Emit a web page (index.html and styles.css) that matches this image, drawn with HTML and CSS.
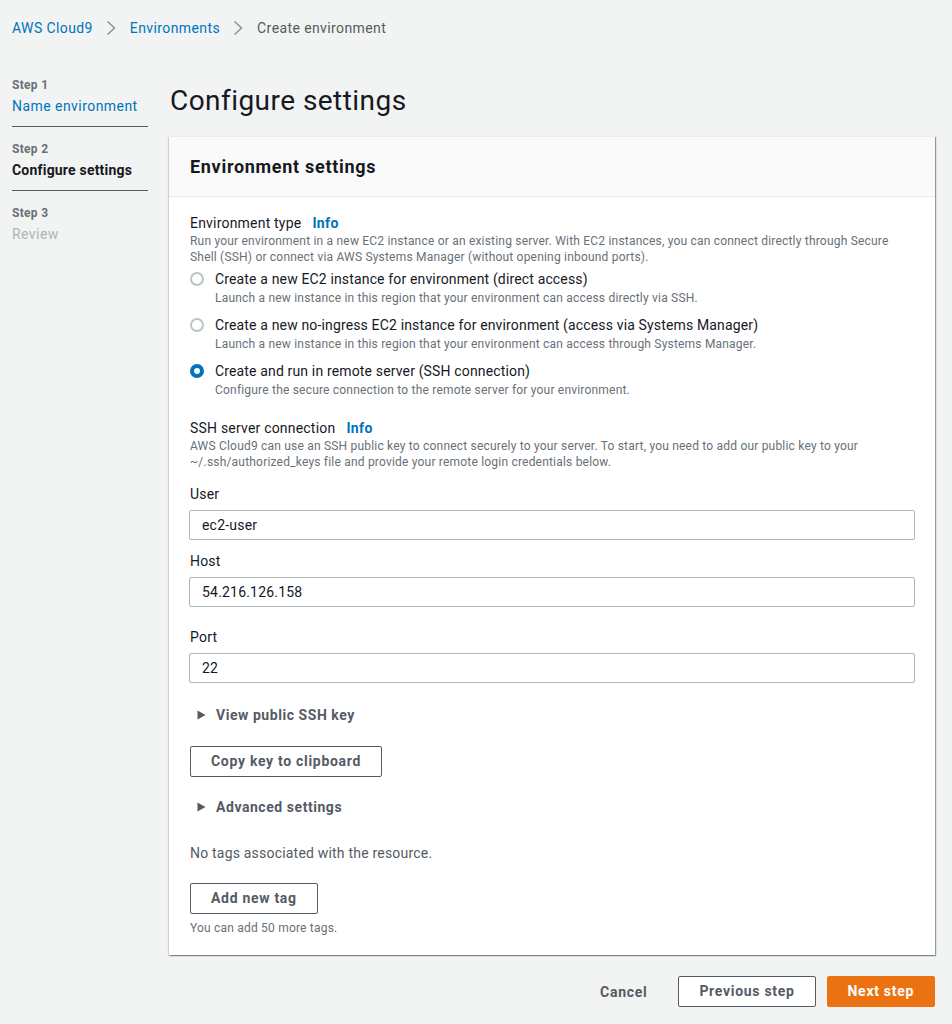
FILE: index.html
```html
<!DOCTYPE html>
<html lang="en">
<head>
<meta charset="utf-8">
<title>Create environment</title>
<link rel="stylesheet" href="styles.css">
</head>
<body>
<nav class="breadcrumbs">
  <a class="crumb link">AWS Cloud9</a>
  <svg class="chev" width="10" height="16" viewBox="0 0 10 16"><path d="M1.5 1.5 L8.5 8 L1.5 14.5" fill="none" stroke="#879596" stroke-width="1.5"/></svg>
  <a class="crumb link">Environments</a>
  <svg class="chev" width="10" height="16" viewBox="0 0 10 16"><path d="M1.5 1.5 L8.5 8 L1.5 14.5" fill="none" stroke="#879596" stroke-width="1.5"/></svg>
  <span class="crumb current">Create environment</span>
</nav>

<div class="layout">
  <aside class="steps">
    <div class="step">
      <div class="step-num">Step 1</div>
      <div class="step-name done">Name environment</div>
    </div>
    <div class="step">
      <div class="step-num">Step 2</div>
      <div class="step-name active">Configure settings</div>
    </div>
    <div class="step last">
      <div class="step-num">Step 3</div>
      <div class="step-name disabled">Review</div>
    </div>
  </aside>

  <main class="main">
    <h1 class="page-title">Configure settings</h1>
    <section class="card">
      <header class="card-header"><h2>Environment settings</h2></header>
      <div class="card-body">
        <div class="field-head">
          <span class="label">Environment type</span><span class="info">Info</span>
        </div>
        <p class="desc">Run your environment in a new EC2 instance or an existing server. With EC2 instances, you can connect directly through Secure Shell (SSH) or connect via AWS Systems Manager (without opening inbound ports).</p>

        <div class="radios">
          <div class="radio">
            <span class="dot"></span>
            <div>
              <div class="radio-label">Create a new EC2 instance for environment (direct access)</div>
              <div class="radio-desc">Launch a new instance in this region that your environment can access directly via SSH.</div>
            </div>
          </div>
          <div class="radio">
            <span class="dot"></span>
            <div>
              <div class="radio-label">Create a new no-ingress EC2 instance for environment (access via Systems Manager)</div>
              <div class="radio-desc">Launch a new instance in this region that your environment can access through Systems Manager.</div>
            </div>
          </div>
          <div class="radio">
            <span class="dot checked"></span>
            <div>
              <div class="radio-label">Create and run in remote server (SSH connection)</div>
              <div class="radio-desc">Configure the secure connection to the remote server for your environment.</div>
            </div>
          </div>
        </div>

        <div class="field-head ssh">
          <span class="label">SSH server connection</span><span class="info">Info</span>
        </div>
        <p class="desc">AWS Cloud9 can use an SSH public key to connect securely to your server. To start, you need to add our public key to your ~/.ssh/authorized_keys file and provide your remote login credentials below.</p>

        <div class="input-field user">
          <label class="label">User</label>
          <div class="input">ec2-user</div>
        </div>
        <div class="input-field host">
          <label class="label">Host</label>
          <div class="input">54.216.126.158</div>
        </div>
        <div class="input-field port">
          <label class="label">Port</label>
          <div class="input">22</div>
        </div>

        <div class="expander ssh-key">
          <svg width="9" height="10" viewBox="0 0 9 10"><path d="M0.5 0.5 L8.5 5 L0.5 9.5 Z" fill="#545b64"/></svg>
          <span>View public SSH key</span>
        </div>
        <div class="btn-row copy"><button class="btn">Copy key to clipboard</button></div>
        <div class="expander advanced">
          <svg width="9" height="10" viewBox="0 0 9 10"><path d="M0.5 0.5 L8.5 5 L0.5 9.5 Z" fill="#545b64"/></svg>
          <span>Advanced settings</span>
        </div>

        <p class="no-tags">No tags associated with the resource.</p>
        <div class="btn-row tag"><button class="btn">Add new tag</button></div>
        <p class="hint">You can add 50 more tags.</p>
      </div>
    </section>

    <div class="actions">
      <button class="btn-link">Cancel</button>
      <button class="btn">Previous step</button>
      <button class="btn primary">Next step</button>
    </div>
  </main>
</div>
</body>
</html>
```

FILE: styles.css
```css
* { box-sizing: border-box; }
html, body { margin: 0; padding: 0; }
body {
  background: #f2f3f3;
  font-family: Roboto, "Liberation Sans", Arial, sans-serif;
  color: #16191f;
  font-size: 14px;
  letter-spacing: 0.2px;
  width: 952px;
  height: 1024px;
  overflow: hidden;
}

.breadcrumbs {
  display: flex;
  align-items: center;
  padding: 18px 0 0 12px;
  height: 38px;
  font-size: 14px;
  line-height: 20px;
  letter-spacing: 0.4px;
}
.crumb.link { color: #0073bb; }
.crumb.current { color: #545b64; }
.chev { margin: 0 14px 0 13px; }

.layout {
  display: flex;
  padding-top: 45px;
}

.steps {
  width: 169px;
  padding-left: 12px;
  padding-right: 21px;
  flex: none;
  margin-top: -10px;
}
.step {
  border-bottom: 1px solid #545b64;
  padding: 4px 0 10px;
  margin-bottom: 10px;
}
.step.last { border-bottom: 0; }
.step-num {
  font-size: 12px;
  line-height: 16px;
  font-weight: 700;
  color: #687078;
  letter-spacing: 0.3px;
}
.step-name {
  font-size: 14px;
  line-height: 20px;
  margin-top: 3px;
  letter-spacing: 0.45px;
}
.step-name.done { color: #0073bb; }
.step-name.active { font-weight: 700; color: #16191f; letter-spacing: 0.2px; }
.step-name.disabled { color: #aab7b8; }

.main {
  width: 766px;
  flex: none;
}
.page-title {
  font-size: 28px;
  font-weight: 400;
  line-height: 36px;
  margin: 0 0 17px 1px;
  color: #16191f;
  letter-spacing: 0.45px;
}

.card {
  background: #fff;
  box-shadow: 1px 1px 1px 0 rgba(0,28,36,0.3), 1px 1px 1px 0 rgba(0,28,36,0.15), -1px 1px 1px 0 rgba(0,28,36,0.15);
  border-top: 1px solid #eaeded;
}
.card-header {
  background: #fafafa;
  border-bottom: 1px solid #eaeded;
  padding: 19px 21px 18px;
}
.card-header h2 {
  margin: 0;
  font-size: 18px;
  line-height: 22px;
  font-weight: 700;
  letter-spacing: 0.7px;
}
.card-body {
  padding: 16px 20px 19px 21px;
}

.field-head {
  display: flex;
  align-items: baseline;
  line-height: 20px;
}
.label { font-size: 14px; color: #16191f; }
.info {
  margin-left: 11px;
  color: #0073bb;
  font-weight: 700;
  font-size: 14px;
  letter-spacing: 0.4px;
}
.desc {
  margin: 0;
  font-size: 12px;
  line-height: 16px;
  color: #687078;
}

.radios { margin-top: 4px; }
.radio {
  display: flex;
  align-items: flex-start;
  margin-bottom: 9px;
}
.dot {
  width: 14px;
  height: 14px;
  border: 2px solid #aab7b8;
  border-radius: 50%;
  margin: 3px 11px 0 0;
  flex: none;
  background: #fff;
  opacity: 0.8;
}
.dot.checked {
  border: 4px solid #0073bb;
  opacity: 1;
}
.radio-label { font-size: 14px; line-height: 20px; letter-spacing: 0.15px; }
.radio-desc {
  font-size: 12px;
  line-height: 16px;
  color: #687078;
  margin-top: 1px;
}

.field-head.ssh { margin-top: 20px; }

.input-field { margin-top: 14px; }
.input-field.host { margin-top: 11px; }
.input-field.port { margin-top: 20px; }
.input-field .label {
  display: block;
  line-height: 20px;
  margin-bottom: 6px;
}
.input {
  margin-left: -1px;
  height: 30px;
  border: 1px solid #aab7b8;
  border-radius: 2px;
  padding: 0 12px;
  line-height: 28px;
  font-size: 14px;
  color: #16191f;
}

.expander {
  display: flex;
  align-items: center;
  font-weight: 700;
  color: #545b64;
  line-height: 20px;
  padding-left: 7px;
  letter-spacing: 0.55px;
}
.expander svg { margin-right: 10px; }
.expander.ssh-key { margin-top: 22px; }
.btn-row.copy { margin-top: 21px; }
.expander.advanced { margin-top: 20px; }

.btn {
  font-family: inherit;
  font-size: 14px;
  font-weight: 700;
  color: #545b64;
  background: #fff;
  border: 1px solid #545b64;
  border-radius: 2px;
  height: 31px;
  padding: 0 20px;
  line-height: 29px;
  letter-spacing: 0.7px;
  cursor: pointer;
}

.no-tags {
  margin: 26px 0 0;
  line-height: 20px;
  color: #545b64;
  font-size: 14px;
}
.btn-row.tag { margin-top: 20px; }
.hint {
  margin: 6px 0 0;
  font-size: 12px;
  line-height: 16px;
  color: #687078;
}

.actions {
  display: flex;
  justify-content: flex-end;
  align-items: center;
  gap: 11px;
  margin-top: 21px;
}
.btn-link {
  font-family: inherit;
  font-size: 14px;
  font-weight: 700;
  color: #545b64;
  background: none;
  border: 0;
  padding: 0 20px;
  height: 31px;
  letter-spacing: 0.7px;
}
.btn.primary {
  background: #ec7211;
  border-color: #ec7211;
  color: #fff;
}
```
